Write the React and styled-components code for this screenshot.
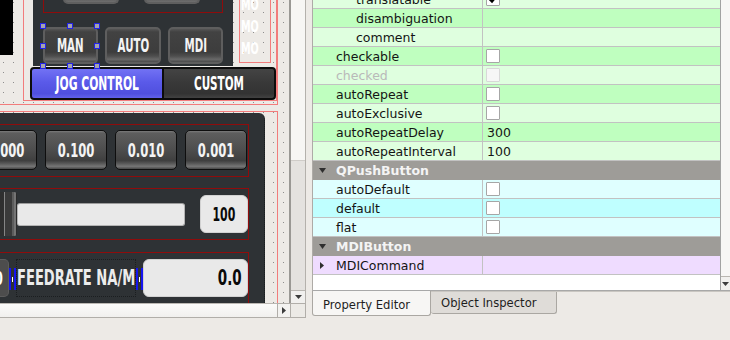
import React from 'react';
import styled, { createGlobalStyle } from 'styled-components';

const GlobalStyle = createGlobalStyle`
  html, body { margin: 0; padding: 0; }
  body {
    background: #edeae6;
    font-family: "DejaVu Sans", "Liberation Sans", sans-serif;
  }
`;

const PINK = '#f27c7c';
const DARKRED = '#8f0c0c';
const PANEL = '#2e3235';

const tones = {
  g1: '#dfffdf',
  g2: '#bfffbf',
  c1: '#dfffff',
  c2: '#bfffff',
  p1: '#efdcff',
};

const properties = [
  { name: 'translatable', level: 2, tone: 'g1', check: 'on' },
  { name: 'disambiguation', level: 2, tone: 'g2' },
  { name: 'comment', level: 2, tone: 'g1' },
  { name: 'checkable', level: 1, tone: 'g2', check: 'off' },
  { name: 'checked', level: 1, tone: 'g1', check: 'disabled', muted: true },
  { name: 'autoRepeat', level: 1, tone: 'g2', check: 'off' },
  { name: 'autoExclusive', level: 1, tone: 'g1', check: 'off' },
  { name: 'autoRepeatDelay', level: 1, tone: 'g2', value: '300' },
  { name: 'autoRepeatInterval', level: 1, tone: 'g1', value: '100' },
  { header: 'QPushButton' },
  { name: 'autoDefault', level: 1, tone: 'c1', check: 'off' },
  { name: 'default', level: 1, tone: 'c2', check: 'off' },
  { name: 'flat', level: 1, tone: 'c1', check: 'off' },
  { header: 'MDIButton' },
  { name: 'MDICommand', level: 1, tone: 'p1', expand: true },
];

const Window = styled.div`
  width: 730px;
  height: 340px;
  overflow: hidden;
  display: flex;
  align-items: flex-start;
  background: #edeae6;
`;

/* ---------- designer canvas ---------- */

const DesignArea = styled.div`
  width: 306px;
  display: flex;
  flex-direction: column;
`;

const ViewRow = styled.div`
  display: flex;
  height: 303px;
`;

const Viewport = styled.div`
  width: 289px;
  height: 303px;
  overflow: hidden;
  background-color: #edeae6;
  background-image: conic-gradient(at 1px 1px, transparent 75%, #8d8d8d 0);
  background-size: 10px 10px;
  background-position: 3px 2px;
`;

const OuterFrame = styled.div`
  box-sizing: border-box;
  margin: -20px 0 0 -10px;
  width: 288px;
  height: 125px;
  border: 1px solid ${PINK};
  display: flex;
  align-items: flex-start;
`;

const BlackBox = styled.div`
  margin-left: 9px;
  width: 13px;
  height: 74px;
  background: #000;
`;

const InnerFrame = styled.div`
  box-sizing: border-box;
  margin-left: 10px;
  width: 254px;
  height: 120px;
  border: 1px solid ${PINK};
  display: flex;
  flex-direction: column;
`;

const TopRow = styled.div`
  display: flex;
  align-items: flex-start;
`;

const DarkTop = styled.div`
  margin-left: 9px;
  width: 200px;
  height: 84px;
  background: ${PANEL};
  padding-left: 10px;
  box-sizing: border-box;
  display: flex;
  flex-direction: column;
`;

const RedTop = styled.div`
  box-sizing: border-box;
  width: 180px;
  height: 31px;
  border: 1px solid ${DARKRED};
  border-top: none;
  display: flex;
  gap: 25px;
  padding-left: 19px;
`;

const Stub = styled.div`
  box-sizing: border-box;
  width: 56px;
  height: 22px;
  border: 2px solid #5f5f5f;
  border-top: none;
  border-radius: 0 0 5px 5px;
  background: linear-gradient(#404040, #3c3c3c 60%, #5a5a5a 80%, #6e6e6e);
`;

const ModeRow = styled.div`
  display: flex;
  gap: 7px;
  margin-top: 14px;
`;

const ModeButton = styled.div`
  position: relative;
  box-sizing: border-box;
  width: ${p => p.$w}px;
  height: 37px;
  border: 2px solid #5e5e5e;
  border-radius: 5px;
  background: linear-gradient(#555 0, #424242 3px, #3d3d3d 70%, #4e4e4e 82%, #686868 92%, #4a4a4a);
  color: #f4f4f4;
  display: flex;
  align-items: center;
  justify-content: center;
`;

const Handle = styled.span`
  position: absolute;
  z-index: 2;
  width: 6px;
  height: 6px;
  box-sizing: border-box;
  border: 1px solid #2323e8;
  background: #a3a3ad;
  left: ${p => p.$x}px;
  top: ${p => p.$y}px;
`;

const MOFrame = styled.div`
  box-sizing: border-box;
  margin-left: 6px;
  width: 32px;
  height: 81px;
  border: 1px solid ${PINK};
  padding-top: 11px;
  padding-left: 1px;
  display: flex;
  flex-direction: column;
  color: #fff;
`;

const MOLine = styled.div`
  height: 22px;
  display: flex;
  align-items: center;
`;

const TabStrip = styled.div`
  box-sizing: border-box;
  margin: 1px 0 0 6px;
  width: 246px;
  height: 33px;
  border: 2px solid #0c0c0c;
  border-radius: 4px;
  display: flex;
  overflow: hidden;
  background: #0c0c0c;
  gap: 2px;
`;

const Segment = styled.div`
  width: ${p => p.$w}px;
  display: flex;
  align-items: center;
  justify-content: center;
  color: #fff;
  background: ${p =>
    p.$active
      ? 'linear-gradient(#7272f4, #5a5ae9 45%, #5050de 85%, #6262ea)'
      : 'linear-gradient(#444, #393939 45%, #333 85%, #424242)'};
`;

const LowerFrame = styled.div`
  box-sizing: border-box;
  margin: 6px 0 0 -10px;
  width: 288px;
  height: 220px;
  border: 1px solid ${PINK};
`;

const DarkLow = styled.div`
  box-sizing: border-box;
  margin-top: 1px;
  width: 274px;
  height: 210px;
  background: ${PANEL};
  border-top-right-radius: 6px;
  border-right: 1px dotted #15181a;
  padding-left: 4px;
  display: flex;
  flex-direction: column;
`;

const RedBox = styled.div`
  box-sizing: border-box;
  width: 254px;
  height: ${p => p.$h}px;
  margin-top: ${p => p.$mt}px;
  border: 1px solid ${DARKRED};
  display: flex;
  align-items: flex-start;
`;

const StepRow = styled.div`
  flex: 1;
  min-width: 0;
  display: flex;
  justify-content: flex-end;
  gap: 8px;
  padding: 5px 1px 0 0;
`;

const StepButton = styled.div`
  box-sizing: border-box;
  flex: 0 0 62px;
  height: 40px;
  border: 1px solid #0e0e0e;
  border-radius: 5px;
  background: linear-gradient(#7c7c7c 0, #5e5e5e 2px, #4d4d4d 50%, #3f3f3f 78%, #5a5a5a 86%, #767676 93%, #454545);
  color: #f4f4f4;
  display: flex;
  align-items: center;
  justify-content: center;
`;

const SliderHandle = styled.div`
  width: 21px;
  height: 44px;
  margin-top: 3px;
  border-radius: 0 3px 3px 0;
  background: linear-gradient(to right, #2f2f2f 0 8px, #858585 8px 9px, #3a3a3a 9px 16px, #5c5c5c 16px 18px, #747474 18px 20px, #2a2a2a 20px);
`;

const Groove = styled.div`
  box-sizing: border-box;
  width: 168px;
  height: 23px;
  margin-top: 14px;
  background: #e9e9e9;
  border: 1px solid #b4b4b4;
  border-top-color: #9c9c9c;
  border-radius: 3px;
`;

const LightBox = styled.div`
  box-sizing: border-box;
  width: ${p => p.$w}px;
  height: 38px;
  margin: ${p => p.$m};
  background: #e9e9e9;
  border: 1px solid #d2d2d2;
  border-radius: 6px;
  color: #0a0a0a;
  display: flex;
  align-items: center;
  justify-content: ${p => p.$justify || 'center'};
  padding-right: ${p => p.$pr || 0}px;
`;

const FeedRow = styled.div`
  flex: 1;
  display: flex;
  align-items: flex-start;
  padding-top: 6px;
`;

const StubBox = styled.div`
  box-sizing: border-box;
  width: 13px;
  height: 38px;
  border-radius: 0 5px 5px 0;
  background: #4d4d4d;
  border: 1px solid #5c5c5c;
  border-left: none;
  color: #fff;
  display: flex;
  align-items: center;
  justify-content: flex-end;
  padding-right: 5px;
  overflow: hidden;
`;

const Marker = styled.div`
  position: relative;
  z-index: 1;
  box-sizing: border-box;
  width: 7px;
  height: 22px;
  margin-top: 9px;
  border-left: 2px solid #1515f0;
  border-right: 2px solid #1515f0;
  display: flex;
  align-items: center;
  justify-content: center;
  &::after {
    content: '';
    width: 1px;
    height: 5px;
    background: #fff;
  }
`;

const FeedLabel = styled.div`
  box-sizing: border-box;
  width: 120px;
  height: 38px;
  border: 1px dotted #1b1e20;
  color: #ececec;
  display: flex;
  align-items: center;
`;

const Cond = styled.span`
  display: inline-block;
  font-family: "DejaVu Sans Condensed", "DejaVu Sans", sans-serif;
  font-stretch: condensed;
  font-weight: bold;
  font-size: ${p => p.$size}px;
  line-height: 1;
  white-space: nowrap;
  transform: scaleX(${p => p.$sx});
  transform-origin: ${p => p.$origin || 'center'};
`;

const VScroll = styled.div`
  box-sizing: border-box;
  width: 17px;
  height: 303px;
  border-left: 2px solid #9a9894;
  border-right: 1px solid #b4b1ac;
  background: #f7f6f4;
  display: flex;
  flex-direction: column;
`;

const VTrack = styled.div`
  flex: 0 0 160px;
`;

const VHandle = styled.div`
  flex: 1;
  background: #e4e2df;
  border-top: 1px solid #cfccc8;
`;

const ArrowBox = styled.div`
  box-sizing: border-box;
  height: ${p => p.$h}px;
  border-top: 1px solid #b9b6b1;
  background: #f1f0ee;
  display: flex;
  align-items: center;
  justify-content: center;
`;

const HScroll = styled.div`
  display: flex;
  height: 15px;
`;

const HTrack = styled.div`
  box-sizing: border-box;
  width: 277px;
  border-top: 1px solid #bbb8b3;
  border-bottom: 1px solid #b1aea9;
  background: linear-gradient(#fbfbfa, #f1f0ee);
`;

const HArrow = styled.div`
  box-sizing: border-box;
  width: 13px;
  border: 1px solid #b1aea9;
  border-right: none;
  background: #f3f2f0;
  display: flex;
  align-items: center;
  justify-content: center;
`;

const Corner = styled.div`
  box-sizing: border-box;
  width: 16px;
  border: 1px solid #b1aea9;
  background: #eceae6;
`;

/* ---------- property editor ---------- */

const Splitter = styled.div`
  width: 6px;
`;

const Dock = styled.div`
  width: 418px;
  display: flex;
  flex-direction: column;
`;

const TreeFrame = styled.div`
  box-sizing: border-box;
  height: 291px;
  border-left: 1px solid #aeaba7;
  border-bottom: 1px solid #a8a8a8;
  display: flex;
`;

const Rows = styled.div`
  width: 407px;
  background: #fff;
  overflow: hidden;
  display: flex;
  flex-direction: column;
  font-size: 12.5px;
  color: #141414;
`;

const RowList = styled.div`
  margin-top: -10px;
`;

const Row = styled.div`
  box-sizing: border-box;
  height: 19px;
  display: flex;
  background: ${p => p.$bg};
  border-bottom: 1px solid #c2c2c2;
`;

const NameCell = styled.div`
  box-sizing: border-box;
  width: 170px;
  border-right: 1px solid #c2c2c2;
  padding-left: ${p => p.$pad}px;
  display: flex;
  align-items: center;
  white-space: nowrap;
  color: ${p => (p.$muted ? '#b9b9b9' : '#141414')};
`;

const ValueCell = styled.div`
  flex: 1;
  display: flex;
  align-items: center;
  padding-left: ${p => (p.$text ? 4 : 3)}px;
`;

const CheckBox = styled.span`
  box-sizing: border-box;
  width: 14px;
  height: 14px;
  border: 1px solid ${p => (p.$disabled ? '#d8d8d8' : '#a6a6a6')};
  background: ${p => (p.$disabled ? '#f6f6f6' : '#fff')};
  border-radius: 1px;
  display: flex;
  align-items: center;
  justify-content: center;
`;

const HeaderRow = styled.div`
  height: 19px;
  display: flex;
  align-items: center;
  padding-left: 6px;
  box-sizing: border-box;
  background: #9e9c98;
  color: #f4f4f4;
  font-weight: bold;
`;

const Caret = styled.svg`
  margin-right: ${p => p.$mr}px;
  flex: none;
`;

const TreeScroll = styled.div`
  box-sizing: border-box;
  width: 10px;
  border-left: 1px solid #a2a2a2;
  background: #f7f6f5;
  display: flex;
  flex-direction: column;
  justify-content: flex-end;
`;

const TabRow = styled.div`
  display: flex;
  align-items: flex-start;
  border-top: 1px solid #c9c6c1;
  font-size: 11.6px;
  color: #1e1e1e;
`;

const Tab = styled.div`
  box-sizing: border-box;
  width: ${p => p.$w}px;
  height: ${p => (p.$active ? 25 : 22)}px;
  margin-top: ${p => (p.$active ? -1 : 0)}px;
  padding-left: 10px;
  padding-top: ${p => (p.$active ? 7 : 4)}px;
  background: ${p => (p.$active ? '#f7f6f4' : '#dfdcd8')};
  border: 1px solid #aaa7a2;
  border-top: none;
  border-left: ${p => (p.$active ? '1px solid #aaa7a2' : 'none')};
  border-radius: 0 0 3px 3px;
  white-space: nowrap;
`;

function DownArrow() {
  return (
    <svg width="7" height="4" viewBox="0 0 7 4">
      <path d="M0 0h7L3.5 4z" fill="#3c3c3c" />
    </svg>
  );
}

function PropRow({ item }) {
  if (item.header) {
    return (
      <HeaderRow>
        <Caret $mr={10} width="7" height="5" viewBox="0 0 7 5">
          <path d="M0 0h7L3.5 5z" fill="#2e2e2e" />
        </Caret>
        <span>{item.header}</span>
      </HeaderRow>
    );
  }
  const pad = item.expand ? 7 : item.level === 2 ? 43 : 23;
  return (
    <Row $bg={tones[item.tone]}>
      <NameCell $pad={pad} $muted={item.muted}>
        {item.expand && (
          <Caret $mr={12} width="4" height="7" viewBox="0 0 4 7">
            <path d="M0 0L4 3.5L0 7z" fill="#2e2e2e" />
          </Caret>
        )}
        {item.name}
      </NameCell>
      <ValueCell $text={!!item.value}>
        {item.check && (
          <CheckBox $disabled={item.check === 'disabled'}>
            {item.check === 'on' && (
              <svg width="10" height="10" viewBox="0 0 10 10">
                <path d="M1.5 5.2L4 7.8L8.8 1.8" stroke="#000" strokeWidth="2" fill="none" />
              </svg>
            )}
          </CheckBox>
        )}
        {item.value}
      </ValueCell>
    </Row>
  );
}

const handles = [
  [-3, -4], [24, -4], [51, -4],
  [-3, 16], [51, 16],
  [-3, 36], [24, 36], [51, 36],
];

export default function App() {
  return (
    <Window>
      <GlobalStyle />
      <DesignArea>
        <ViewRow>
          <Viewport>
            <OuterFrame>
              <BlackBox />
              <InnerFrame>
                <TopRow>
                  <DarkTop>
                    <RedTop>
                      <Stub />
                      <Stub />
                    </RedTop>
                    <ModeRow>
                      <ModeButton $w={55}>
                        <Cond $size={19} $sx={0.6}>MAN</Cond>
                        {handles.map(([x, y]) => (
                          <Handle key={`${x}-${y}`} $x={x - 2} $y={y - 2} />
                        ))}
                      </ModeButton>
                      <ModeButton $w={56}>
                        <Cond $size={19} $sx={0.6}>AUTO</Cond>
                      </ModeButton>
                      <ModeButton $w={55}>
                        <Cond $size={19} $sx={0.6}>MDI</Cond>
                      </ModeButton>
                    </ModeRow>
                  </DarkTop>
                  <MOFrame>
                    {['MO', 'MO', 'MO'].map((t, i) => (
                      <MOLine key={i}>
                        <Cond $size={16.5} $sx={0.65} $origin="left">{t}</Cond>
                      </MOLine>
                    ))}
                  </MOFrame>
                </TopRow>
                <TabStrip>
                  <Segment $w={130} $active>
                    <Cond $size={19} $sx={0.63}>JOG CONTROL</Cond>
                  </Segment>
                  <Segment $w={110}>
                    <Cond $size={19} $sx={0.61}>CUSTOM</Cond>
                  </Segment>
                </TabStrip>
              </InnerFrame>
            </OuterFrame>

            <LowerFrame>
              <DarkLow>
                <RedBox $h={53} $mt={11}>
                  <StepRow>
                    {['1.000', '0.100', '0.010', '0.001'].map(s => (
                      <StepButton key={s}>
                        <Cond $size={19} $sx={0.68}>{s}</Cond>
                      </StepButton>
                    ))}
                  </StepRow>
                </RedBox>
                <RedBox $h={52} $mt={11}>
                  <SliderHandle />
                  <Groove />
                  <LightBox $w={48} $m="6px 0 0 15px">
                    <Cond $size={19} $sx={0.64}>100</Cond>
                  </LightBox>
                </RedBox>
                <RedBox $h={70} $mt={12}>
                  <FeedRow>
                    <StubBox>
                      <Cond $size={19} $sx={0.68} $origin="right">0</Cond>
                    </StubBox>
                    <Marker />
                    <FeedLabel>
                      <Cond $size={22} $sx={0.662} $origin="left">FEEDRATE NA/M</Cond>
                    </FeedLabel>
                    <Marker />
                    <LightBox $w={105} $m="0" $justify="flex-end" $pr={5}>
                      <Cond $size={20.5} $sx={0.73} $origin="right">0.0</Cond>
                    </LightBox>
                  </FeedRow>
                </RedBox>
              </DarkLow>
            </LowerFrame>
          </Viewport>
          <VScroll>
            <VTrack />
            <VHandle />
            <ArrowBox $h={13}>
              <DownArrow />
            </ArrowBox>
          </VScroll>
        </ViewRow>
        <HScroll>
          <HTrack />
          <HArrow>
            <svg width="4" height="7" viewBox="0 0 4 7">
              <path d="M0 0L4 3.5L0 7z" fill="#3c3c3c" />
            </svg>
          </HArrow>
          <Corner />
        </HScroll>
      </DesignArea>

      <Splitter />

      <Dock>
        <TreeFrame>
          <Rows>
            <RowList>
              {properties.map((p, i) => (
                <PropRow key={i} item={p} />
              ))}
            </RowList>
          </Rows>
          <TreeScroll>
            <ArrowBox $h={14}>
              <DownArrow />
            </ArrowBox>
          </TreeScroll>
        </TreeFrame>
        <TabRow>
          <Tab $w={119} $active>Property Editor</Tab>
          <Tab $w={126}>Object Inspector</Tab>
        </TabRow>
      </Dock>
    </Window>
  );
}
